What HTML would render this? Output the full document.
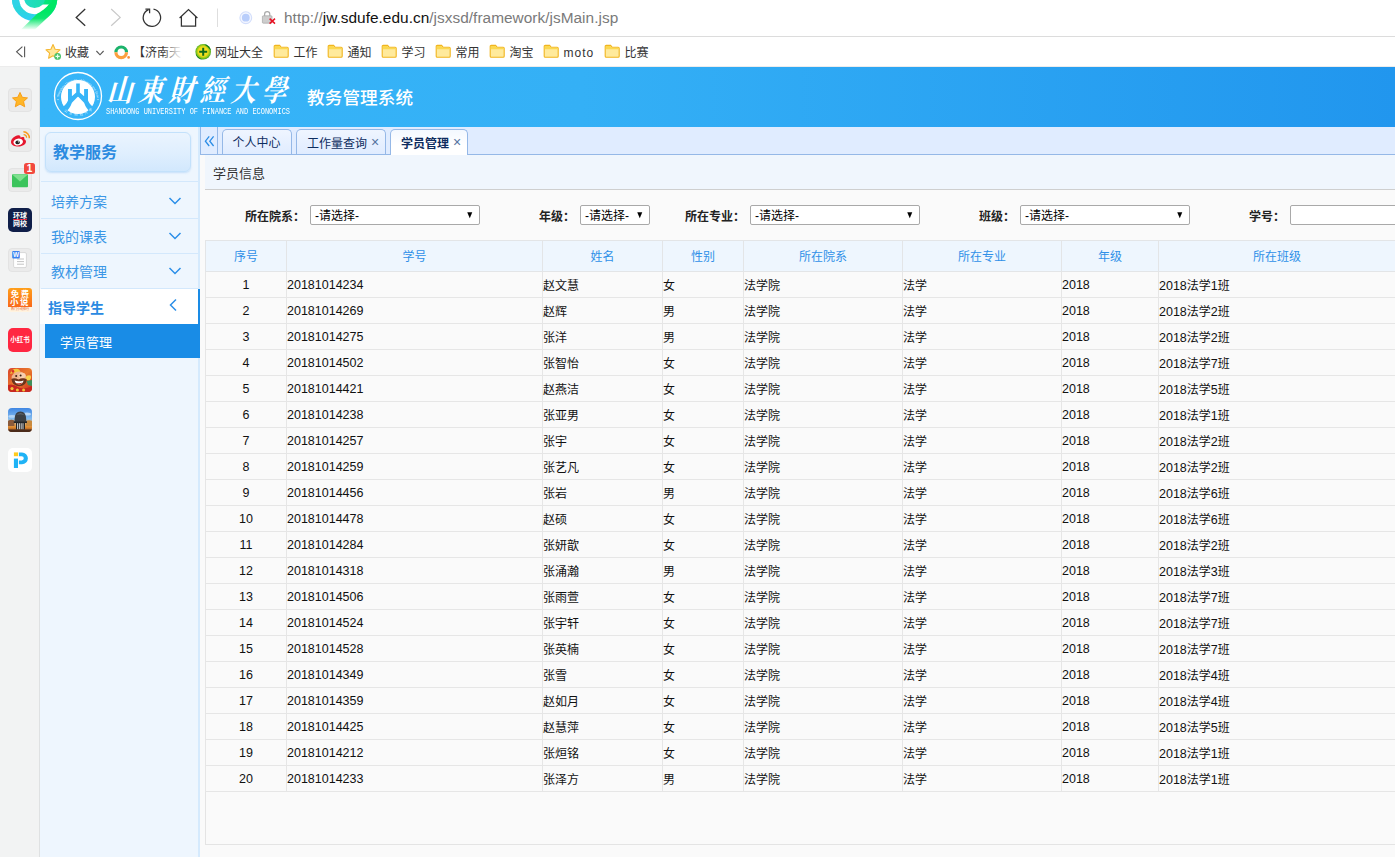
<!DOCTYPE html>
<html lang="zh-CN">
<head>
<meta charset="utf-8">
<title>教务管理系统</title>
<style>
*{box-sizing:border-box;margin:0;padding:0}
html,body{width:1395px;height:857px;overflow:hidden;background:#fafafa}
body{position:relative;font-family:"Liberation Sans","Noto Sans CJK SC",sans-serif;font-size:12px;color:#000}
.abs{position:absolute}
/* browser chrome */
#top{left:0;top:0;width:1395px;height:36px;background:#fff}
#topline{left:0;top:36px;width:1395px;height:1px;background:#dcdcdc}
#bm{left:0;top:37px;width:1395px;height:29px;background:#fff}
#bmline{left:0;top:66px;width:1395px;height:1px;background:#ececec}
#url{left:284px;top:8px;font-size:15.4px;line-height:20px;color:#7a7a7a;white-space:nowrap;letter-spacing:0.03px}
#url b{font-weight:normal;color:#111}
.bmt{position:absolute;top:44.5px;font-size:12px;line-height:17px;color:#333;white-space:nowrap}
/* left strip */
#strip{left:0;top:67px;width:40px;height:790px;background:#f2f3f3;border-right:1px solid #dfe1e2}
.ico{position:absolute;left:8px;width:24px;height:24px;border-radius:4px;overflow:hidden}
.icob{background:#ebebeb;border:1px solid #e3e3e3}
/* header */
#hdr{left:40px;top:67px;width:1355px;height:60px;background:linear-gradient(90deg,#37b5f8 0%,#34b0f6 40%,#2196ee 100%)}
#sys{left:307px;top:87px;font-size:17.6px;line-height:22px;color:#fff;font-weight:500;letter-spacing:0.1px;white-space:nowrap}
#cal{left:106px;top:71px;font-family:"Liberation Serif","Noto Serif CJK SC",serif;font-weight:700;font-style:italic;font-size:30px;line-height:40px;color:#fff;letter-spacing:6.8px;white-space:nowrap;transform:skewX(-4deg) scaleX(.84);transform-origin:0 100%}
#eng{left:106px;top:107px;font-family:"Liberation Mono",monospace;font-size:8.6px;line-height:11px;color:#fff;white-space:nowrap;transform:scaleX(.811);transform-origin:0 50%}
/* sidebar */
#side{left:40px;top:127px;width:160px;height:730px;background:#eef6fe}
#sideb{left:198px;top:127px;width:2px;height:730px;background:#d5eafd}
#svc{left:45px;top:132px;width:146px;height:40px;border:1px solid #c3e1fb;border-radius:6px;background:linear-gradient(180deg,#eaf4fe 0%,#e0effe 50%,#d2e8fd 100%);box-shadow:0 1px 2px rgba(120,180,240,.35)}
#svc span{position:absolute;left:7px;top:9px;font-size:16px;line-height:22px;font-weight:bold;color:#2c8be0;white-space:nowrap}
.sep{position:absolute;left:41px;width:157px;height:1px;background:#d3e8fc}
.mi{position:absolute;left:51px;font-size:14px;line-height:20px;color:#3b97e6;white-space:nowrap}
.chev{position:absolute}
#act{left:40px;top:289px;width:158px;height:35px;background:#fff}
#actb{left:198px;top:289px;width:2px;height:69px;background:#1a8be5}
#sub{left:45px;top:324px;width:155px;height:34px;background:#198ce6}
#sub span{position:absolute;left:15px;top:9.5px;font-size:13px;line-height:18px;color:#fff;white-space:nowrap}
/* tabs */
#tabs{left:200px;top:127px;width:1195px;height:28px;background:#e0ecff;border-bottom:1px solid #95b8e7}
#tscroll{left:200px;top:127px;width:18px;height:28px;border:1px solid #95b8e7;border-top:0;background:#e0ecff}
.tab{position:absolute;top:129px;height:25px;border:1px solid #95b8e7;border-bottom:0;border-radius:5px 5px 0 0;background:linear-gradient(180deg,#eff5ff 0%,#e0ecff 100%);font-size:12px;line-height:27.6px;color:#0e2d5f;white-space:nowrap;padding-left:10px}
.tab.sel{background:linear-gradient(180deg,#f3f8ff 0%,#fff 60%);color:#0e2d5f;height:26px;font-weight:bold}
.tab i{font-style:normal;font-weight:normal;color:#5572a0;font-size:14px;margin-left:4px;position:relative;top:-1.5px}
/* panel */
#ph{left:205px;top:155px;width:1190px;height:35px;background:#f0f6fd;border-bottom:1px solid #cfcfcf}
#ph span{position:absolute;left:8px;top:9.5px;font-size:13px;line-height:18px;color:#333}
.lab{position:absolute;top:207.5px;font-size:12px;line-height:18px;font-weight:bold;color:#222;white-space:nowrap}
.sel2{position:absolute;top:205px;height:20px;border:1px solid #a9a9a9;background:#fff;border-radius:2px;font-size:12px;line-height:21px;color:#000;padding-left:4px;white-space:nowrap}
.sel2 b{position:absolute;right:5.5px;top:0;font-size:10px;font-weight:normal;line-height:17.5px;transform:scaleX(.86);transform-origin:100% 50%}
/* table */
#tw{left:205px;top:240px;width:1195px;height:605px;border:1px solid #e4e4e4;border-right:0;background:#fafafa}
table{position:absolute;left:205px;top:240px;width:1190px;border-collapse:collapse;table-layout:fixed}
th{height:31px;padding-bottom:1px;background:#eef6fe;color:#2f90e8;font-weight:normal;font-size:12px;border:1px solid #e3e5e7;text-align:center}
td{height:26px;font-size:12.5px;border:1px solid #e6e6e6;color:#111;padding-left:0;white-space:nowrap;background:#fafafa}
td.c{text-align:center;padding-left:0}
td .z{font-size:12px}
</style>
</head>
<body>
<!-- ============ browser chrome ============ -->
<div class="abs" id="top"></div>
<div class="abs" id="topline"></div>
<div class="abs" id="bm"></div>
<div class="abs" id="bmline"></div>
<svg class="abs" style="left:0;top:0" width="70" height="36" viewBox="0 0 70 36">
<defs>
<linearGradient id="g360" x1="12" y1="0" x2="57" y2="0" gradientUnits="userSpaceOnUse"><stop offset="0" stop-color="#2fd3e6"/><stop offset=".45" stop-color="#22dcc4"/><stop offset=".75" stop-color="#05e57a"/><stop offset="1" stop-color="#00e765"/></linearGradient>
<linearGradient id="g360t" x1="0" y1="12" x2="0" y2="30" gradientUnits="userSpaceOnUse"><stop offset="0" stop-color="#00e765"/><stop offset=".35" stop-color="#0ee770"/><stop offset="1" stop-color="#fff"/></linearGradient>
<linearGradient id="g360d" x1="24" y1="0" x2="46" y2="0" gradientUnits="userSpaceOnUse"><stop offset="0" stop-color="#22dbc8"/><stop offset="1" stop-color="#1be0a8"/></linearGradient>
<linearGradient id="g360b" x1="0" y1="10" x2="0" y2="21" gradientUnits="userSpaceOnUse"><stop offset="0" stop-color="#2ad6dc"/><stop offset="1" stop-color="#30cdf6"/></linearGradient>
</defs>
<circle cx="34.6" cy="-1.5" r="19.2" fill="none" stroke="url(#g360b)" stroke-width="7"/>
<path d="M57.3 -2 C57.3 8 52 14 46 19 L35 29.5 L21 29.5 L37.5 13.5 C44 10 48 6 49.5 3 L50 -2 Z" fill="url(#g360t)"/>
<path d="M12 -2 A22.6 22.6 0 0 0 14 8 L20.5 5 A15.6 15.6 0 0 1 19 -2 Z" fill="#2fd3e6"/>
<path d="M40 -3 H52 V2 L48.6 4.4 H41 Z" fill="url(#g360)"/>
<circle cx="34.6" cy="-2.5" r="10.6" fill="url(#g360d)"/>

</svg>
<svg class="abs" style="left:70px;top:0" width="220" height="36" viewBox="70 0 220 36" fill="none">
<path d="M85.2 9 L76.2 17.4 L85.2 25.8" stroke="#333" stroke-width="1.3"/>
<path d="M111.2 9 L120.2 17.4 L111.2 25.8" stroke="#c8c8c8" stroke-width="1.2"/>
<path d="M148.6 9.6 A8.7 8.7 0 1 0 153.5 9.1" stroke="#333" stroke-width="1.25"/>
<path d="M145.4 9.2 H149.6 V13.2" stroke="#333" stroke-width="1.25"/>
<path d="M179.6 18 L188.5 9.6 L197.4 18 M181.4 16.6 V26 H195.6 V16.6" stroke="#333" stroke-width="1.25"/>
<path d="M217.5 8.5 V27" stroke="#dedede" stroke-width="1"/>
<circle cx="245.8" cy="17.7" r="5.9" fill="#f4f7ff" stroke="#d3defb" stroke-width="1.1"/><circle cx="245.8" cy="17.7" r="3.9" fill="#b9cefb"/>
<path d="M264.6 16 V14.2 A2.6 2.6 0 0 1 269.8 14.2 V16" stroke="#a9a9a9" stroke-width="1.2"/>
<rect x="262.4" y="15.8" width="9.6" height="7.4" rx="0.8" fill="#cdcdcd" stroke="#a6a6a6" stroke-width=".7"/>
<path d="M269.6 18.6 L275 23.6 M275 18.6 L269.6 23.6" stroke="#e81123" stroke-width="1.5"/>
</svg>
<div class="abs" id="url">http://<b>jw.sdufe.edu.cn</b>/jsxsd/framework/jsMain.jsp</div>
<svg class="abs" style="left:14px;top:44px" width="14" height="16" viewBox="0 0 14 16" fill="none"><path d="M8.4 2.6 L2.6 7.8 L8.4 13" stroke="#555" stroke-width="1.1"/><path d="M10.6 2.4 V13.2" stroke="#555" stroke-width="1.1"/></svg>
<svg class="abs" style="left:44px;top:43px" width="20" height="18" viewBox="0 0 20 18"><path d="M9 1.6 L11.1 6.2 L16 6.8 L12.4 10.2 L13.4 15.2 L9 12.7 L4.6 15.2 L5.6 10.2 L2 6.8 L6.9 6.2 Z" fill="#ffe79a" stroke="#f5b731" stroke-width="1.1" stroke-linejoin="round"/><circle cx="13.6" cy="13.4" r="3.4" fill="#4cc26a"/><path d="M13.6 11.3 V15.5 M11.5 13.4 H15.7" stroke="#eaffef" stroke-width="1.1"/></svg>
<div class="bmt" style="left:65px">收藏</div>
<svg class="abs" style="left:94.5px;top:48px" width="10" height="10" viewBox="0 0 10 10" fill="none"><path d="M1.4 3 L5 6.8 L8.6 3" stroke="#555" stroke-width="1.1"/></svg>
<svg class="abs" style="left:113px;top:43px" width="18" height="18" viewBox="0 0 18 18" fill="none"><path d="M2.9 9.3 A5.3 5.3 0 0 1 13.5 9.3" stroke="#1cb36b" stroke-width="3.2"/><path d="M2.9 9.3 A5.3 5.3 0 0 0 13.5 9.3" stroke="#fc9f3e" stroke-width="3.2"/><circle cx="15.6" cy="14.4" r="1.35" fill="#fb8f3a"/></svg>
<div class="bmt" style="left:133px;width:52px;overflow:hidden">【济南天</div>
<div class="abs" style="left:162px;top:40px;width:28px;height:24px;background:linear-gradient(90deg,rgba(255,255,255,0),rgba(255,255,255,.75) 50%,#fff 80%)"></div>
<svg class="abs" style="left:194px;top:43px" width="18" height="18" viewBox="0 0 18 18"><defs><radialGradient id="g3" cx=".5" cy=".48" r=".55"><stop offset="0" stop-color="#fdf03a"/><stop offset=".55" stop-color="#f0dc18"/><stop offset=".8" stop-color="#7cc21c"/><stop offset="1" stop-color="#1f8a22"/></radialGradient></defs><circle cx="9.2" cy="8.8" r="7.8" fill="url(#g3)"/><path d="M10 1.2 A7.8 7.8 0 0 1 16.9 7.6 Q14 3.6 10 1.2Z" fill="#147a1e"/><path d="M1.6 10.4 A7.8 7.8 0 0 0 9 16.6 Q4.2 15 1.6 10.4Z" fill="#147a1e"/><path d="M9.2 4.8 V12.8 M5.2 8.8 H13.2" stroke="#0f6a1c" stroke-width="2"/></svg>
<div class="bmt" style="left:215px">网址大全</div>
<svg class="abs" style="left:272.6px;top:44.3px" width="17" height="15" viewBox="0 0 17 15"><path d="M1.2 2.4 Q1.2 1.4 2.2 1.4 H6.6 L8 3.2 H14.2 Q15.2 3.2 15.2 4.2 V12.2 Q15.2 13.2 14.2 13.2 H2.2 Q1.2 13.2 1.2 12.2 Z" fill="#ffea9c" stroke="#f1b51f" stroke-width="1.1"/><path d="M1.8 2.5 Q1.8 2 2.3 2 H6.3 L7.7 3.8 H14.6 V5.2 H1.8 Z" fill="#fbd84f"/></svg><div class="bmt" style="left:293.5px">工作</div>
<svg class="abs" style="left:326.6px;top:44.3px" width="17" height="15" viewBox="0 0 17 15"><path d="M1.2 2.4 Q1.2 1.4 2.2 1.4 H6.6 L8 3.2 H14.2 Q15.2 3.2 15.2 4.2 V12.2 Q15.2 13.2 14.2 13.2 H2.2 Q1.2 13.2 1.2 12.2 Z" fill="#ffea9c" stroke="#f1b51f" stroke-width="1.1"/><path d="M1.8 2.5 Q1.8 2 2.3 2 H6.3 L7.7 3.8 H14.6 V5.2 H1.8 Z" fill="#fbd84f"/></svg><div class="bmt" style="left:347.5px">通知</div>
<svg class="abs" style="left:380.6px;top:44.3px" width="17" height="15" viewBox="0 0 17 15"><path d="M1.2 2.4 Q1.2 1.4 2.2 1.4 H6.6 L8 3.2 H14.2 Q15.2 3.2 15.2 4.2 V12.2 Q15.2 13.2 14.2 13.2 H2.2 Q1.2 13.2 1.2 12.2 Z" fill="#ffea9c" stroke="#f1b51f" stroke-width="1.1"/><path d="M1.8 2.5 Q1.8 2 2.3 2 H6.3 L7.7 3.8 H14.6 V5.2 H1.8 Z" fill="#fbd84f"/></svg><div class="bmt" style="left:401.5px">学习</div>
<svg class="abs" style="left:434.6px;top:44.3px" width="17" height="15" viewBox="0 0 17 15"><path d="M1.2 2.4 Q1.2 1.4 2.2 1.4 H6.6 L8 3.2 H14.2 Q15.2 3.2 15.2 4.2 V12.2 Q15.2 13.2 14.2 13.2 H2.2 Q1.2 13.2 1.2 12.2 Z" fill="#ffea9c" stroke="#f1b51f" stroke-width="1.1"/><path d="M1.8 2.5 Q1.8 2 2.3 2 H6.3 L7.7 3.8 H14.6 V5.2 H1.8 Z" fill="#fbd84f"/></svg><div class="bmt" style="left:455.5px">常用</div>
<svg class="abs" style="left:488.6px;top:44.3px" width="17" height="15" viewBox="0 0 17 15"><path d="M1.2 2.4 Q1.2 1.4 2.2 1.4 H6.6 L8 3.2 H14.2 Q15.2 3.2 15.2 4.2 V12.2 Q15.2 13.2 14.2 13.2 H2.2 Q1.2 13.2 1.2 12.2 Z" fill="#ffea9c" stroke="#f1b51f" stroke-width="1.1"/><path d="M1.8 2.5 Q1.8 2 2.3 2 H6.3 L7.7 3.8 H14.6 V5.2 H1.8 Z" fill="#fbd84f"/></svg><div class="bmt" style="left:509.5px">淘宝</div>
<svg class="abs" style="left:542.6px;top:44.3px" width="17" height="15" viewBox="0 0 17 15"><path d="M1.2 2.4 Q1.2 1.4 2.2 1.4 H6.6 L8 3.2 H14.2 Q15.2 3.2 15.2 4.2 V12.2 Q15.2 13.2 14.2 13.2 H2.2 Q1.2 13.2 1.2 12.2 Z" fill="#ffea9c" stroke="#f1b51f" stroke-width="1.1"/><path d="M1.8 2.5 Q1.8 2 2.3 2 H6.3 L7.7 3.8 H14.6 V5.2 H1.8 Z" fill="#fbd84f"/></svg><div class="bmt" style="left:563.5px;letter-spacing:1px">moto</div>
<svg class="abs" style="left:603.6px;top:44.3px" width="17" height="15" viewBox="0 0 17 15"><path d="M1.2 2.4 Q1.2 1.4 2.2 1.4 H6.6 L8 3.2 H14.2 Q15.2 3.2 15.2 4.2 V12.2 Q15.2 13.2 14.2 13.2 H2.2 Q1.2 13.2 1.2 12.2 Z" fill="#ffea9c" stroke="#f1b51f" stroke-width="1.1"/><path d="M1.8 2.5 Q1.8 2 2.3 2 H6.3 L7.7 3.8 H14.6 V5.2 H1.8 Z" fill="#fbd84f"/></svg><div class="bmt" style="left:624.5px">比赛</div>


<!-- ============ left strip ============ -->
<div class="abs" id="strip"></div>
<div class="ico icob" style="top:88px"></div>
<svg class="abs" style="left:8px;top:88px" width="24" height="24" viewBox="0 0 24 24"><path d="M12 4.4 L14.3 9.3 L19.5 9.9 L15.6 13.5 L16.7 18.8 L12 16.1 L7.3 18.8 L8.4 13.5 L4.5 9.9 L9.7 9.3 Z" fill="#ffb627" stroke="#f79a10" stroke-width=".9" stroke-linejoin="round"/></svg>
<div class="ico icob" style="top:128px"></div>
<svg class="abs" style="left:8px;top:128px" width="24" height="24" viewBox="0 0 24 24"><path d="M10.2 7.2 C7 7.6 3 10.6 3 13.9 C3 16.8 6.4 18.6 10.4 18.6 C14.8 18.6 18 16.2 18 13.6 C18 12.2 17 11.6 16.2 11.3 C16.6 10.2 16.4 9.3 15.4 9 C14.4 8.7 13.2 9.2 12.4 9.6 C12.8 8.2 12 6.9 10.2 7.2 Z" fill="#e6162d"/><ellipse cx="10.2" cy="14" rx="4.8" ry="3.4" fill="#fff" transform="rotate(-10 10.2 14)"/><ellipse cx="9.6" cy="14.4" rx="2.2" ry="1.9" fill="#222"/><circle cx="10.4" cy="13.8" r=".6" fill="#fff"/><path d="M15.6 6.6 A3 3 0 0 1 18.6 9.8" fill="none" stroke="#f79a1c" stroke-width="1.3"/><path d="M15.4 3.8 A6 6 0 0 1 21.3 10.2" fill="none" stroke="#f79a1c" stroke-width="1.5"/></svg>
<div class="ico icob" style="top:168px"></div>
<svg class="abs" style="left:8px;top:168px" width="24" height="24" viewBox="0 0 24 24"><rect x="4" y="6.2" width="16" height="13" rx="1" fill="#3cc45c"/><path d="M4.2 6.4 L12 13.6 L19.8 6.4 Z" fill="#7fe08f"/></svg>
<div class="abs" style="left:24px;top:163px;width:11px;height:11px;border-radius:2.5px;background:#f2493d;color:#fff;font-size:10px;line-height:11px;font-weight:bold;text-align:center">1</div>
<div class="ico" style="top:208px;background:#101f49;border-radius:5px;color:#fff;font-size:7px;font-weight:bold;line-height:7.4px;text-align:center;padding-top:4px;letter-spacing:0">环球<div style="height:1px;background:#e8243a;margin:0 5px"></div>网校</div>
<div class="ico icob" style="top:248px"></div>
<svg class="abs" style="left:8px;top:248px" width="24" height="24" viewBox="0 0 24 24"><path d="M7 4.6 H17 Q18.4 4.6 18.4 6 V18.2 Q18.4 19.6 17 19.6 H7 Q5.6 19.6 5.6 18.2 V6 Q5.6 4.6 7 4.6Z" fill="#fff" stroke="#cfcfcf" stroke-width=".8"/><path d="M9 11 H16 M9 13.6 H16 M9 16.2 H16" stroke="#c4c4c4" stroke-width="1"/><rect x="4.2" y="3" width="7.6" height="7.6" rx="1" fill="#3b82f0"/></svg>
<div class="abs" style="left:12.2px;top:251px;width:7.6px;height:7.6px;color:#fff;font-size:6.4px;line-height:7.8px;font-weight:bold;text-align:center">W</div>
<div class="ico" style="top:288px;background:linear-gradient(180deg,#ff9f1a 0%,#f9691a 78%,#fff3e0 79%,#fff3e0 100%);border-radius:3px;color:#fff;font-size:8.4px;line-height:8.6px;font-weight:bold;text-align:center;padding-top:1.6px;letter-spacing:1.6px;text-indent:1.6px">免费<br>小说</div>
<div class="abs" style="left:8px;top:307px;width:24px;height:5px;font-size:3px;line-height:5px;color:#e0561a;text-align:center;white-space:nowrap;overflow:hidden">热门小说排行</div>
<div class="ico" style="top:328px;background:#ff2741;border-radius:5px;color:#fff;font-size:6.5px;line-height:24px;font-weight:bold;text-align:center;white-space:nowrap">小红书</div>
<svg class="abs" style="left:8px;top:368px" width="24" height="24" viewBox="0 0 24 24"><defs><clipPath id="c1"><rect width="24" height="24" rx="4"/></clipPath><linearGradient id="gm1" x1="0" y1="0" x2="1" y2="1"><stop offset="0" stop-color="#d9432a"/><stop offset=".5" stop-color="#ea7a2c"/><stop offset="1" stop-color="#c9281f"/></linearGradient></defs><g clip-path="url(#c1)"><rect width="24" height="24" fill="url(#gm1)"/><path d="M2 6 Q4 0 10 1 Q13 2 12 6 Q7 4 2 6Z" fill="#f3c63a"/><circle cx="5" cy="3.4" r="1.3" fill="#d92a2a"/><ellipse cx="11" cy="10" rx="7.4" ry="6.4" fill="#f0b48c"/><ellipse cx="14" cy="7.4" rx="3.6" ry="2.6" fill="#f7cfae"/><circle cx="8.2" cy="8" r="1" fill="#3a1f12"/><circle cx="12.6" cy="7.6" r="1" fill="#3a1f12"/><path d="M3.4 11 Q6 9.4 10.6 11.4 Q15 9.4 18.8 11.2 Q18.6 17.8 11 18.2 Q4.2 17.8 3.4 11Z" fill="#6d351c"/><path d="M6.6 12.6 Q11 14.2 15.6 12.4 Q14.6 16.2 11 16.4 Q7.4 16.2 6.6 12.6Z" fill="#fff"/><path d="M7.6 14.8 Q11 16 14.6 14.6 Q13.4 16.6 11 16.8 Q8.6 16.6 7.6 14.8Z" fill="#c4392e"/><path d="M17.4 9.6 Q19 6.4 22.6 7.4 Q24 10 21.4 12.4 Q18.6 12.6 17.4 9.6Z" fill="#f7d24a"/><path d="M18.6 13 L24 12 V18 L20 17Z" fill="#3f8f5a"/><path d="M0 17 Q5 15.6 11 19.4 Q17 22 24 18 V24 H0Z" fill="#c7261f"/><circle cx="4" cy="20.6" r="1.6" fill="#f3c23b"/><circle cx="9.4" cy="22" r="1.5" fill="#f3c23b"/><circle cx="15.6" cy="22" r="1.5" fill="#f3c23b"/></g></svg>
<svg class="abs" style="left:8px;top:408px" width="24" height="24" viewBox="0 0 24 24"><defs><clipPath id="c2"><rect width="24" height="24" rx="4"/></clipPath><linearGradient id="sky" x1="0" y1="0" x2="0" y2="1"><stop offset="0" stop-color="#3f86e2"/><stop offset=".45" stop-color="#86bdf0"/><stop offset=".62" stop-color="#d8b27a"/><stop offset=".8" stop-color="#e08a2e"/><stop offset="1" stop-color="#7a3a1c"/></linearGradient></defs><g clip-path="url(#c2)"><rect width="24" height="24" fill="url(#sky)"/><ellipse cx="19" cy="6" rx="4" ry="1.6" fill="#cfe4f8" opacity=".8"/><ellipse cx="4" cy="8.4" rx="3.6" ry="1.4" fill="#cfe4f8" opacity=".7"/><path d="M0 13 Q3 10.6 6.4 12.4 V18 H0Z" fill="#8a5a3a"/><path d="M18 13 Q21 11.4 24 13 V18 H18Z" fill="#c98a3e"/><path d="M6.6 11.4 Q6.6 3.4 12.4 3.4 Q18.2 3.4 18.2 11.4 V13.8 H6.6Z" fill="#3b3f45"/><path d="M8.4 7 Q12.4 3.6 16.6 7 Q12.4 5.6 8.4 7Z" fill="#6a7078"/><path d="M5.8 13.2 H19 V15 H5.8Z" fill="#24272b"/><rect x="8" y="15" width="9" height="6.6" fill="#1f2226"/><path d="M9.6 15.2 V21.4 M11.4 15.2 V21.4 M13.2 15.2 V21.4 M15 15.2 V21.4" stroke="#e6e6e6" stroke-width=".9"/><path d="M0 21.4 H24 V24 H0Z" fill="#4a2a1a"/></g></svg>
<div class="ico" style="top:448px;background:#fff;border-radius:5px"></div>
<svg class="abs" style="left:8px;top:448px" width="24" height="24" viewBox="0 0 24 24"><rect x="5.9" y="4.4" width="4.1" height="3.8" fill="#ffcb1f"/><rect x="5.9" y="10.6" width="4.1" height="9.4" fill="#1fb3f6"/><path d="M10.9 4.4 H14 A5.9 5.9 0 0 1 14 16.2 H10.9 V12.4 H13.7 A2.1 2.1 0 0 0 13.7 8.2 H10.9Z" fill="#1fb3f6"/></svg>

<!-- ============ header ============ -->
<div class="abs" id="hdr"></div>
<svg class="abs" style="left:52px;top:70px" width="52" height="52" viewBox="0 0 52 52">
<defs>
<mask id="emk"><rect width="52" height="52" fill="#000"/><circle cx="26" cy="27" r="17" fill="#fff"/>
<path d="M24.2 13.4 H27.8 V22.4 L32.1 26.2 V19 H36 V30.4 Q37.6 34.6 43.4 38.6 L39.4 43.4 Q34 38.6 32.1 32.8 L27 27.4 Q26 26.2 25 27.4 L19.9 32.8 Q18 38.6 12.6 43.4 L8.6 38.6 Q14.4 34.6 16 30.4 V19 H19.9 V26.2 L24.2 22.4 Z" fill="#000"/></mask>
<path id="arcT" d="M6.9 28.4 A19.2 19.2 0 0 1 45.1 28.4" fill="none"/>
<path id="arcB" d="M8.4 36.5 A21.4 21.4 0 0 0 43.6 36.5" fill="none"/>
</defs>
<circle cx="26" cy="26" r="23.5" fill="none" stroke="#fff" stroke-width="1.3"/>
<rect width="52" height="52" fill="#fff" mask="url(#emk)"/>
<text font-family="Liberation Sans,sans-serif" font-size="2.9" fill="#fff" opacity=".85" letter-spacing="0"><textPath href="#arcT" startOffset="1.5">Shandong University of Finance and Economics</textPath></text>
<text font-family="Noto Sans CJK SC,sans-serif" font-size="3.3" fill="#fff" opacity=".8" letter-spacing="2.2"><textPath href="#arcB" startOffset="6">山东财经大学</textPath></text>
<circle cx="6" cy="29.6" r=".6" fill="#fff" opacity=".85"/><circle cx="46" cy="29.6" r=".6" fill="#fff" opacity=".85"/>
</svg>
<div class="abs" id="cal">山東財經大學</div>
<div class="abs" id="eng">SHANDONG UNIVERSITY OF FINANCE AND ECONOMICS</div>
<div class="abs" id="sys">教务管理系统</div>

<!-- ============ sidebar ============ -->
<div class="abs" id="side"></div>
<div class="abs" id="sideb"></div>
<div class="abs" id="svc"><span>教学服务</span></div>
<div class="sep" style="top:181px"></div>
<div class="sep" style="top:218px"></div>
<div class="sep" style="top:253px"></div>
<div class="sep" style="top:288px"></div>
<div class="mi" style="top:191.5px">培养方案</div>
<div class="mi" style="top:226.5px">我的课表</div>
<div class="mi" style="top:261.5px">教材管理</div>
<div class="abs" id="act"></div>
<div class="abs" id="actb"></div>
<div class="mi" style="top:297.5px;left:48px;font-weight:bold;color:#2a8ae2">指导学生</div>
<div class="abs" id="sub"><span>学员管理</span></div>
<svg class="chev" style="left:168px;top:195px" width="14" height="12" viewBox="0 0 14 12"><path d="M1.5 3 L7 8.5 L12.5 3" fill="none" stroke="#2b8fe8" stroke-width="1.5"/></svg>
<svg class="chev" style="left:168px;top:230px" width="14" height="12" viewBox="0 0 14 12"><path d="M1.5 3 L7 8.5 L12.5 3" fill="none" stroke="#2b8fe8" stroke-width="1.5"/></svg>
<svg class="chev" style="left:168px;top:265px" width="14" height="12" viewBox="0 0 14 12"><path d="M1.5 3 L7 8.5 L12.5 3" fill="none" stroke="#2b8fe8" stroke-width="1.5"/></svg>
<svg class="chev" style="left:167px;top:298px" width="12" height="14" viewBox="0 0 12 14"><path d="M9 1.5 L3.5 7 L9 12.5" fill="none" stroke="#2b8fe8" stroke-width="1.5"/></svg>

<!-- ============ tabs ============ -->
<div class="abs" id="tabs"></div>
<div class="abs" id="tscroll"></div>
<div class="tab" style="left:222px;width:70px;padding-left:9.5px">个人中心</div>
<div class="tab" style="left:296px;width:90px">工作量查询<i>×</i></div>
<div class="tab sel" style="left:390px;width:78px">学员管理<i>×</i></div>
<svg class="abs" style="left:203px;top:134px" width="12" height="14" viewBox="0 0 12 14"><path d="M6.2 2.4 L2.4 7.2 L6.2 12 M10.6 2.4 L6.8 7.2 L10.6 12" fill="none" stroke="#2b8de6" stroke-width="1.3"/></svg>

<!-- ============ panel ============ -->
<div class="abs" id="ph"><span>学员信息</span></div>
<div class="lab" style="left:245px">所在院系：</div><div class="sel2" style="left:310px;width:170px">-请选择-<b>▼</b></div>
<div class="lab" style="left:539px">年级：</div><div class="sel2" style="left:580px;width:70px">-请选择-<b>▼</b></div>
<div class="lab" style="left:685px">所在专业：</div><div class="sel2" style="left:750px;width:170px">-请选择-<b>▼</b></div>
<div class="lab" style="left:979px">班级：</div><div class="sel2" style="left:1020px;width:170px">-请选择-<b>▼</b></div>
<div class="lab" style="left:1249px">学号：</div><div class="sel2" style="left:1290px;width:120px"></div>

<div class="abs" id="tw"></div>
<table>
<colgroup><col style="width:81px"><col style="width:256px"><col style="width:120px"><col style="width:81px"><col style="width:159px"><col style="width:159px"><col style="width:97px"><col style="width:237px"></colgroup>
<tr><th>序号</th><th>学号</th><th>姓名</th><th>性别</th><th>所在院系</th><th>所在专业</th><th>年级</th><th>所在班级</th></tr>
<tr><td class="c">1</td><td>20181014234</td><td><span class="z">赵文慧</span></td><td><span class="z">女</span></td><td><span class="z">法学院</span></td><td><span class="z">法学</span></td><td>2018</td><td>2018<span class="z">法学</span>1<span class="z">班</span></td></tr>
<tr><td class="c">2</td><td>20181014269</td><td><span class="z">赵辉</span></td><td><span class="z">男</span></td><td><span class="z">法学院</span></td><td><span class="z">法学</span></td><td>2018</td><td>2018<span class="z">法学</span>2<span class="z">班</span></td></tr>
<tr><td class="c">3</td><td>20181014275</td><td><span class="z">张洋</span></td><td><span class="z">男</span></td><td><span class="z">法学院</span></td><td><span class="z">法学</span></td><td>2018</td><td>2018<span class="z">法学</span>2<span class="z">班</span></td></tr>
<tr><td class="c">4</td><td>20181014502</td><td><span class="z">张智怡</span></td><td><span class="z">女</span></td><td><span class="z">法学院</span></td><td><span class="z">法学</span></td><td>2018</td><td>2018<span class="z">法学</span>7<span class="z">班</span></td></tr>
<tr><td class="c">5</td><td>20181014421</td><td><span class="z">赵燕洁</span></td><td><span class="z">女</span></td><td><span class="z">法学院</span></td><td><span class="z">法学</span></td><td>2018</td><td>2018<span class="z">法学</span>5<span class="z">班</span></td></tr>
<tr><td class="c">6</td><td>20181014238</td><td><span class="z">张亚男</span></td><td><span class="z">女</span></td><td><span class="z">法学院</span></td><td><span class="z">法学</span></td><td>2018</td><td>2018<span class="z">法学</span>1<span class="z">班</span></td></tr>
<tr><td class="c">7</td><td>20181014257</td><td><span class="z">张宇</span></td><td><span class="z">女</span></td><td><span class="z">法学院</span></td><td><span class="z">法学</span></td><td>2018</td><td>2018<span class="z">法学</span>2<span class="z">班</span></td></tr>
<tr><td class="c">8</td><td>20181014259</td><td><span class="z">张艺凡</span></td><td><span class="z">女</span></td><td><span class="z">法学院</span></td><td><span class="z">法学</span></td><td>2018</td><td>2018<span class="z">法学</span>2<span class="z">班</span></td></tr>
<tr><td class="c">9</td><td>20181014456</td><td><span class="z">张岩</span></td><td><span class="z">男</span></td><td><span class="z">法学院</span></td><td><span class="z">法学</span></td><td>2018</td><td>2018<span class="z">法学</span>6<span class="z">班</span></td></tr>
<tr><td class="c">10</td><td>20181014478</td><td><span class="z">赵硕</span></td><td><span class="z">女</span></td><td><span class="z">法学院</span></td><td><span class="z">法学</span></td><td>2018</td><td>2018<span class="z">法学</span>6<span class="z">班</span></td></tr>
<tr><td class="c">11</td><td>20181014284</td><td><span class="z">张妍歆</span></td><td><span class="z">女</span></td><td><span class="z">法学院</span></td><td><span class="z">法学</span></td><td>2018</td><td>2018<span class="z">法学</span>2<span class="z">班</span></td></tr>
<tr><td class="c">12</td><td>20181014318</td><td><span class="z">张涌瀚</span></td><td><span class="z">男</span></td><td><span class="z">法学院</span></td><td><span class="z">法学</span></td><td>2018</td><td>2018<span class="z">法学</span>3<span class="z">班</span></td></tr>
<tr><td class="c">13</td><td>20181014506</td><td><span class="z">张雨萱</span></td><td><span class="z">女</span></td><td><span class="z">法学院</span></td><td><span class="z">法学</span></td><td>2018</td><td>2018<span class="z">法学</span>7<span class="z">班</span></td></tr>
<tr><td class="c">14</td><td>20181014524</td><td><span class="z">张宇轩</span></td><td><span class="z">女</span></td><td><span class="z">法学院</span></td><td><span class="z">法学</span></td><td>2018</td><td>2018<span class="z">法学</span>7<span class="z">班</span></td></tr>
<tr><td class="c">15</td><td>20181014528</td><td><span class="z">张英楠</span></td><td><span class="z">女</span></td><td><span class="z">法学院</span></td><td><span class="z">法学</span></td><td>2018</td><td>2018<span class="z">法学</span>7<span class="z">班</span></td></tr>
<tr><td class="c">16</td><td>20181014349</td><td><span class="z">张雪</span></td><td><span class="z">女</span></td><td><span class="z">法学院</span></td><td><span class="z">法学</span></td><td>2018</td><td>2018<span class="z">法学</span>4<span class="z">班</span></td></tr>
<tr><td class="c">17</td><td>20181014359</td><td><span class="z">赵如月</span></td><td><span class="z">女</span></td><td><span class="z">法学院</span></td><td><span class="z">法学</span></td><td>2018</td><td>2018<span class="z">法学</span>4<span class="z">班</span></td></tr>
<tr><td class="c">18</td><td>20181014425</td><td><span class="z">赵慧萍</span></td><td><span class="z">女</span></td><td><span class="z">法学院</span></td><td><span class="z">法学</span></td><td>2018</td><td>2018<span class="z">法学</span>5<span class="z">班</span></td></tr>
<tr><td class="c">19</td><td>20181014212</td><td><span class="z">张烜铭</span></td><td><span class="z">女</span></td><td><span class="z">法学院</span></td><td><span class="z">法学</span></td><td>2018</td><td>2018<span class="z">法学</span>1<span class="z">班</span></td></tr>
<tr><td class="c">20</td><td>20181014233</td><td><span class="z">张泽方</span></td><td><span class="z">男</span></td><td><span class="z">法学院</span></td><td><span class="z">法学</span></td><td>2018</td><td>2018<span class="z">法学</span>1<span class="z">班</span></td></tr>
</table>
</body>
</html>
